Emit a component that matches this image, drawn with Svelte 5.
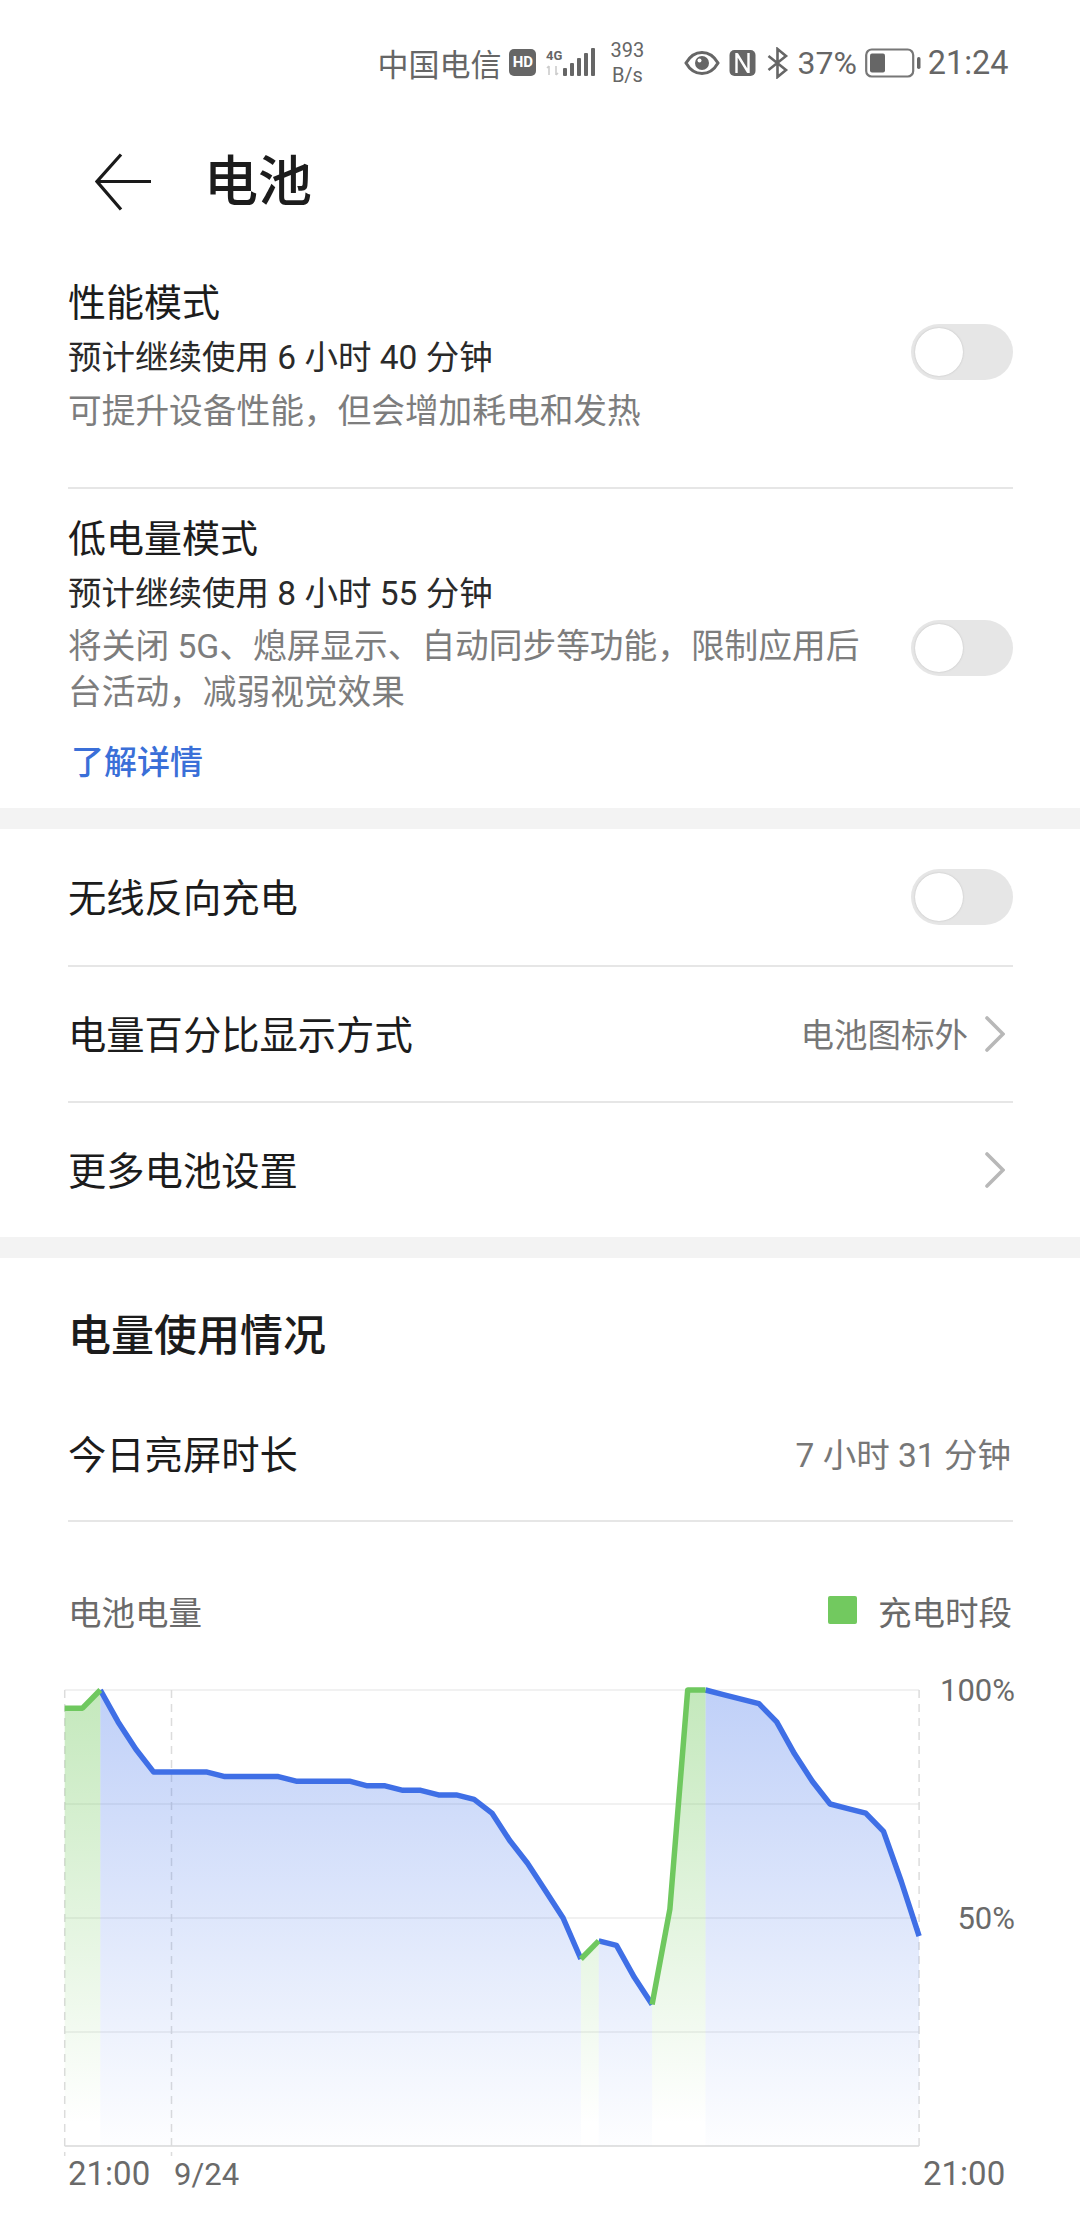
<script>
  // battery level per half hour, 48 steps over the day
  const levels = [96, 96, 100, 93, 87, 82, 82, 82, 82, 81, 81, 81, 81, 80, 80, 80, 80, 79, 79, 78, 78, 77, 77, 76, 73, 67, 62, 56, 50, 41, 45, 44, 37, 31, 52, 100, 100, 99, 98, 97, 93, 86, 80, 75, 74, 73, 69, 58, 46];
  const charging = [[0, 2], [29, 30], [33, 36]];

  const left = 64.7;
  const step = 17.8;
  const top = 54;
  const bottom = 510;
  const right = left + step * 48;

  const px = (i) => left + i * step;
  const py = (v) => bottom - ((bottom - top) * v) / 100;

  const line = (from, to) => {
    let pts = [];
    for (let i = from; i <= to; i++) pts.push(`${px(i).toFixed(1)},${py(levels[i]).toFixed(1)}`);
    return pts.join(' ');
  };
  const area = (from, to) => `${px(from).toFixed(1)},${bottom} ${line(from, to)} ${px(to).toFixed(1)},${bottom}`;

  const grid = [top, top + 114, top + 228, top + 342];
  const dashes = [px(0), px(6), right];

  // stretches between charging periods
  const drain = [[2, 29], [30, 33], [36, 48]];

  const bars = [[0, 8], [7, 13], [14, 18], [21, 23], [28, 28]];
</script>

<div class="page">
  <div class="status">
    <span class="carrier">中国电信</span>
    <span class="hd">HD</span>
    <svg class="signal" width="50" height="30" viewBox="0 0 50 30">
      <text x="0" y="12" class="g4">4G</text>
      <path d="M3 18v9M1 20l2-2M10 18v9M10 27l2-2" stroke="#ccc" stroke-width="1.6" fill="none" />
      <g fill="#666">
        {#each bars as b}
          <rect x={17 + b[0]} y={28 - b[1]} width="4" height={b[1]} rx="1" />
        {/each}
      </g>
    </svg>
    <span class="speed">393<br />B/s</span>
    <svg class="eye" width="36" height="28" viewBox="0 0 36 28">
      <path d="M2 14C6 7 11 3.5 18 3.5S30 7 34 14C30 21 25 24.5 18 24.5S6 21 2 14Z" fill="none" stroke="#666" stroke-width="3" />
      <circle cx="18" cy="14" r="7" fill="#666" />
      <circle cx="15.5" cy="11.5" r="2" fill="#fff" />
    </svg>
    <svg class="nfc" width="27" height="28" viewBox="0 0 27 28">
      <rect x="0.5" y="1" width="26" height="26" rx="5" fill="#666" />
      <path d="M7.5 4V24M19.5 4V24M8 5L19 23" stroke="#fff" stroke-width="2.4" fill="none" />
    </svg>
    <svg class="bt" width="24" height="32" viewBox="0 0 24 32">
      <path d="M2.5 9L20 23L11.5 30V2L20 9L2.5 23" fill="none" stroke="#666" stroke-width="2.6" />
    </svg>
    <span class="pct">37%</span>
    <svg class="battery" width="56" height="30" viewBox="0 0 56 30">
      <rect x="1.2" y="1.5" width="47" height="27" rx="5.5" fill="none" stroke="#777" stroke-width="2.2" />
      <rect x="5" y="5.5" width="15" height="19" rx="2" fill="#666" />
      <rect x="52" y="9" width="3.5" height="12" rx="1.7" fill="#666" />
    </svg>
    <span class="clock">21:24</span>
  </div>

  <header class="head">
    <svg width="58" height="58" viewBox="0 0 58 58">
      <path d="M26 1.5L2 28.5L26 56.5M2.5 28.5H56" fill="none" stroke="#1a1a1a" stroke-width="3.2" />
    </svg>
    <h1>电池</h1>
  </header>

  <section class="mode first">
    <div class="mode-text">
      <div class="title">性能模式</div>
      <div class="sub">预计继续使用 6 小时 40 分钟</div>
      <div class="desc">可提升设备性能，但会增加耗电和发热</div>
    </div>
    <span class="toggle"><i></i></span>
  </section>

  <section class="mode second">
    <div class="mode-text">
      <div class="title">低电量模式</div>
      <div class="sub">预计继续使用 8 小时 55 分钟</div>
      <div class="desc">将关闭 5G、熄屏显示、自动同步等功能，限制应用后台活动，减弱视觉效果</div>
      <div class="link">了解详情</div>
    </div>
    <span class="toggle"><i></i></span>
  </section>

  <div class="band"></div>

  <div class="row">
    <span class="label">无线反向充电</span>
    <span class="toggle"><i></i></span>
  </div>
  <div class="row ruled">
    <span class="label">电量百分比显示方式</span>
    <span class="value">电池图标外</span>
    <svg class="chev" width="20" height="36" viewBox="0 0 20 36"><path d="M2 2L18 18L2 34" fill="none" stroke="#b8b8b8" stroke-width="3.6" stroke-linecap="round" /></svg>
  </div>
  <div class="row ruled">
    <span class="label">更多电池设置</span>
    <svg class="chev" width="20" height="36" viewBox="0 0 20 36"><path d="M2 2L18 18L2 34" fill="none" stroke="#b8b8b8" stroke-width="3.6" stroke-linecap="round" /></svg>
  </div>

  <div class="band"></div>

  <h2>电量使用情况</h2>
  <div class="row today">
    <span class="label">今日亮屏时长</span>
    <span class="value plain">7 小时 31 分钟</span>
  </div>

  <div class="legend">
    <span class="legend-title">电池电量</span>
    <span class="swatch"></span>
    <span class="legend-title">充电时段</span>
  </div>

  <svg class="chart" width="1080" height="591" viewBox="0 0 1080 591">
    <defs>
      <linearGradient id="blue" gradientUnits="userSpaceOnUse" x1="0" y1={top} x2="0" y2={bottom}>
        <stop offset="0" stop-color="#3f71ea" stop-opacity="0.33" />
        <stop offset="1" stop-color="#3f71ea" stop-opacity="0.01" />
      </linearGradient>
      <linearGradient id="green" gradientUnits="userSpaceOnUse" x1="0" y1={top} x2="0" y2={bottom}>
        <stop offset="0" stop-color="#72c95f" stop-opacity="0.42" />
        <stop offset="0.95" stop-color="#72c95f" stop-opacity="0" />
      </linearGradient>
    </defs>

    {#each grid as y}
      <line x1={left} x2={right} y1={y} y2={y} stroke="#ededed" stroke-width="1.5" />
    {/each}
    <line x1={left} x2={right} y1={bottom} y2={bottom} stroke="#e2e2e2" stroke-width="2" />
    {#each dashes as x, i}
      <line x1={x} x2={x} y1={top} y2={i === 2 ? bottom + 4 : bottom + 10} stroke="#dcdcdc" stroke-width="1.5" stroke-dasharray="8 6" />
    {/each}

    {#each drain as [a, b]}
      <polygon points={area(a, b)} fill="url(#blue)" />
    {/each}
    {#each charging as [a, b]}
      <polygon points={area(a, b)} fill="url(#green)" />
    {/each}

    {#each drain as [a, b]}
      <polyline points={line(a, b)} fill="none" stroke="#3f6fe6" stroke-width="5.5" stroke-linejoin="round" />
    {/each}
    {#each charging as [a, b]}
      <polyline points={line(a, b)} fill="none" stroke="#6fc85f" stroke-width="5.5" stroke-linejoin="round" />
    {/each}

    <text x="1015" y={top + 11} text-anchor="end" class="axis">100%</text>
    <text x="1015" y={top + 239} text-anchor="end" class="axis">50%</text>
    <text x="68" y="549" class="axis wide">21:00</text>
    <text x="174" y="549" class="axis small">9/24</text>
    <text x="923" y="549" class="axis wide">21:00</text>
  </svg>
</div>

<style>
  :global(body) {
    margin: 0;
    background: #fff;
  }

  .page {
    width: 1080px;
    height: 2228px;
    overflow: hidden;
    background: #fff;
    font-family: Roboto, "Noto Sans CJK SC", sans-serif;
    color: #1c1c1c;
  }

  .status {
    height: 90px;
    padding-right: 71.5px;
    padding-top: 35px;
    box-sizing: border-box;
    display: flex;
    justify-content: flex-end;
    align-items: center;
    color: #666;
  }

  .carrier {
    font-size: 31px;
    margin-right: 8px;
  }

  .hd {
    width: 27px;
    height: 27px;
    border-radius: 5px;
    background: #666;
    color: #fff;
    font-size: 15px;
    font-weight: 700;
    line-height: 27px;
    text-align: center;
    margin-right: 10px;
  }

  .signal {
    margin-right: 13px;
  }

  .g4 {
    font-size: 13px;
    font-weight: 700;
    fill: #666;
    font-family: Roboto, sans-serif;
  }

  .speed {
    font-size: 20px;
    line-height: 25px;
    text-align: center;
    width: 36px;
    margin-right: 39px;
  }

  .eye {
    margin-right: 9px;
  }

  .nfc {
    margin-right: 10px;
  }

  .bt {
    margin-right: 7px;
  }

  .pct {
    font-size: 32px;
    margin-right: 8px;
  }

  .battery {
    margin-right: 7px;
  }

  .clock {
    font-size: 32.4px;
  }

  .head {
    height: 184px;
    padding-left: 95px;
    display: flex;
    align-items: center;
    gap: 51px;
  }

  .head h1 {
    margin: 0;
    font-size: 54px;
    font-weight: 500;
    line-height: 62px;
    padding-top: 2px;
  }

  .mode {
    margin: 0 67px 0 68px;
    display: flex;
    justify-content: space-between;
    align-items: center;
  }

  .mode.first {
    padding: 2px 0 52px;
    border-bottom: 2px solid #e6e6e6;
  }

  .mode.first .toggle {
    margin-bottom: 7px;
  }

  .mode.second {
    padding: 23px 0 22px;
  }

  .mode.second .toggle {
    margin-bottom: 2px;
  }

  .mode.second .desc {
    margin-top: 3px;
  }

  .mode-text {
    max-width: 800px;
  }

  .title {
    font-size: 38px;
    line-height: 54px;
  }

  .sub {
    font-size: 33.5px;
    line-height: 55px;
    color: #2a2a2a;
  }

  .desc {
    font-size: 33.7px;
    line-height: 46px;
    margin-top: 4px;
    color: #7d7d7d;
  }

  .link {
    font-size: 33px;
    line-height: 46px;
    margin-top: 24px;
    margin-left: 3px;
    font-weight: 500;
    color: #3a6fd8;
  }

  .toggle {
    width: 102px;
    height: 56px;
    border-radius: 28px;
    background: #e6e6e6;
    flex: none;
    position: relative;
  }

  .toggle i {
    position: absolute;
    left: 4px;
    top: 4px;
    width: 48px;
    height: 48px;
    border-radius: 50%;
    background: #fff;
    box-shadow: 0 0 2px #bbb;
  }

  .band {
    height: 21px;
    background: #f3f3f3;
  }

  .row {
    height: 136px;
    margin: 0 67px 0 68px;
    box-sizing: border-box;
    display: flex;
    align-items: center;
  }

  .row.ruled {
    border-top: 2px solid #e6e6e6;
  }

  .label {
    font-size: 38.3px;
    flex: 1;
    padding-bottom: 4px;
  }

  .value {
    font-size: 33.5px;
    color: #777;
    margin-right: 17px;
    padding-bottom: 3px;
  }

  .value.plain {
    margin-right: 0;
    padding-right: 2px;
  }

  .chev {
    margin-right: 8px;
  }

  h2 {
    margin: 0 0 0 68px;
    padding: 51px 0 25px;
    font-size: 43px;
    line-height: 54px;
    font-weight: 500;
  }

  .row.today {
    height: 134px;
    border-bottom: 2px solid #e6e6e6;
  }

  .legend {
    margin: 64px 68px 2px 68px;
    height: 48px;
    display: flex;
    align-items: center;
  }

  .legend-title {
    font-size: 33.5px;
    color: #6a6a6a;
  }

  .legend-title:first-child {
    flex: 1;
  }

  .swatch {
    width: 29px;
    height: 28px;
    border-radius: 2px;
    background: #72c95f;
    margin-right: 21px;
  }

  .chart {
    display: block;
  }

  .axis {
    font-size: 31px;
    fill: #6a6a6a;
    font-family: Roboto, sans-serif;
  }

  .axis.wide {
    font-size: 33px;
  }

  .axis.small {
    font-size: 31px;
  }
</style>
